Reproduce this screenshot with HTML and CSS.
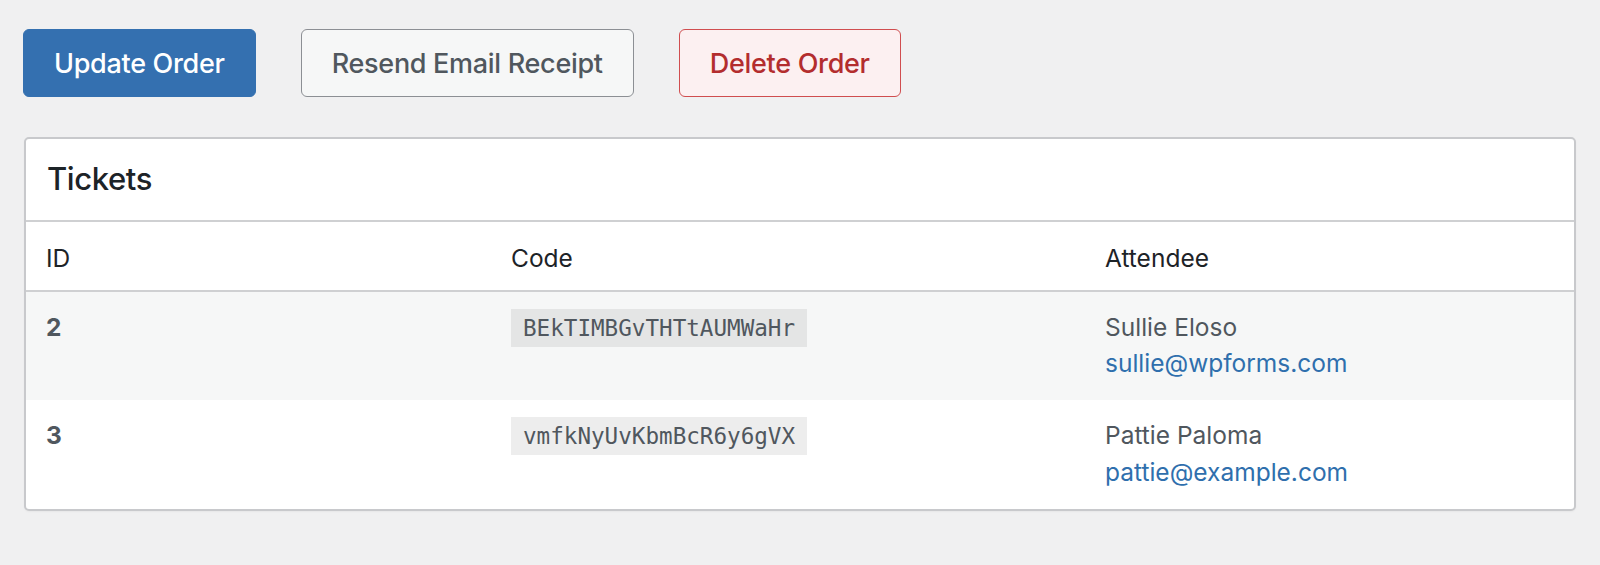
FILE: index.html
```html
<!DOCTYPE html>
<html lang="en">
<head>
<meta charset="utf-8">
<title>Order tickets</title>
<link rel="stylesheet" href="styles.css">
</head>
<body>
<main class="page">
  <div class="actions">
    <button class="btn btn-primary" type="button">Update Order</button>
    <button class="btn btn-secondary" type="button">Resend Email Receipt</button>
    <button class="btn btn-danger" type="button">Delete Order</button>
  </div>

  <section class="card">
    <header class="card-head">
      <h2 class="card-title">Tickets</h2>
    </header>
    <div class="tickets">
      <div class="row row-head">
        <div class="cell">ID</div>
        <div class="cell">Code</div>
        <div class="cell">Attendee</div>
      </div>
      <div class="row row-alt">
        <div class="cell cell-id">2</div>
        <div class="cell"><code class="code">BEkTIMBGvTHTtAUMWaHr</code></div>
        <div class="cell attendee">
          <span class="name">Sullie Eloso</span>
          <a class="email" href="mailto:sullie@wpforms.com">sullie@wpforms.com</a>
        </div>
      </div>
      <div class="row">
        <div class="cell cell-id">3</div>
        <div class="cell"><code class="code">vmfkNyUvKbmBcR6y6gVX</code></div>
        <div class="cell attendee">
          <span class="name">Pattie Paloma</span>
          <a class="email" href="mailto:pattie@example.com">pattie@example.com</a>
        </div>
      </div>
    </div>
  </section>
</main>
</body>
</html>
```

FILE: styles.css
```css
* {
  box-sizing: border-box;
}

html,
body {
  margin: 0;
  background: #f0f0f1;
}

body {
  font-family: Inter, "Liberation Sans", sans-serif;
  font-size: 24.5px;
  line-height: 36.7px;
  color: #50575e;
}

.page {
  padding: 29px 24px 40px;
}

/* action buttons */
.actions {
  display: flex;
  gap: 45px;
  margin-left: -1px;
}

.btn {
  height: 68px;
  padding: 0 30px;
  border: 1.5px solid;
  border-radius: 6px;
  font-family: Inter, "Liberation Sans", sans-serif;
  font-size: 27px;
  font-weight: 500;
  letter-spacing: -0.3px;
  line-height: 1;
  cursor: pointer;
}

.btn-primary {
  background: #3470b0;
  border-color: #3470b0;
  color: #fff;
}

.btn-secondary {
  background: #f6f7f7;
  border-color: #8c8f94;
  color: #50575e;
}

.btn-danger {
  background: #fcf0f1;
  border-color: #d04d4f;
  color: #b32d2e;
}

/* tickets card */
.card {
  margin-top: 39.5px;
  background: #fff;
  border: 2px solid #c8c9cc;
  border-radius: 5px;
  box-shadow: 0 1px 2px rgba(0, 0, 0, 0.04);
  overflow: hidden;
}

.card-head {
  height: 83.5px;
  display: flex;
  align-items: center;
  padding: 0 21px;
  border-bottom: 2px solid #cfd0d2;
}

.card-title {
  margin: 0;
  font-size: 31px;
  font-weight: 500;
  letter-spacing: -0.4px;
  color: #1d2327;
}

.row {
  display: grid;
  grid-template-columns: 465px 594px 1fr;
}

.cell {
  padding: 17px 20px 18px;
}

.row-head {
  border-bottom: 2px solid #cfd0d2;
  color: #1d2327;
}

.row-head .cell {
  padding: 17.5px 20px 13.5px;
}

.row-alt {
  background: #f6f7f7;
}

.cell-id {
  font-weight: 700;
  color: #50575e;
}

.code {
  display: inline-block;
  height: 38px;
  padding: 0 12px;
  line-height: 38px;
  vertical-align: baseline;
  background: rgba(0, 0, 0, 0.07);
  font-family: "DejaVu Sans Mono", "Liberation Mono", monospace;
  font-size: 22.6px;
  color: #50575e;
}

.attendee {
  display: flex;
  flex-direction: column;
}

.email {
  color: #2f6fad;
  text-decoration: none;
}
```
